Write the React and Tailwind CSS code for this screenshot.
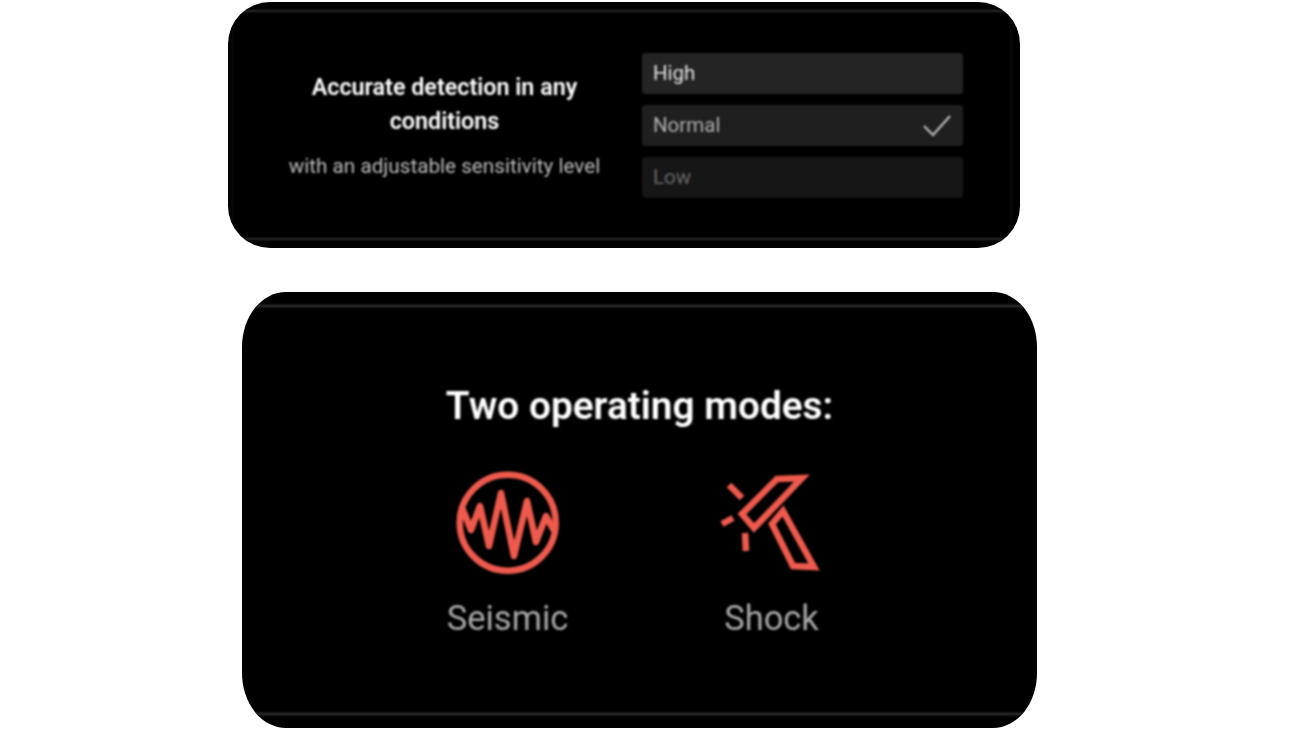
import React from "react";

const options = [
  { label: "High", row: "bg-[#242424] text-[#e4e4e4]" },
  { label: "Normal", row: "bg-[#1f1f1f] text-[#b0b0b0]", checked: true },
  { label: "Low", row: "bg-[#161616] text-[#666666]" },
];

const SeismicIcon = () => (
  <svg width="140" height="120" viewBox="-3 0 140 120" fill="none" stroke="#ee5a4d" strokeWidth="6.5">
    <circle cx="66.7" cy="61.7" r="48" />
    <path
      d="M22 49 L30 69 L39 45 L48 85 L60 32 L73 95 L86 40 L95 81 L105 55 L112 68"
      strokeLinejoin="round"
      strokeLinecap="round"
    />
  </svg>
);

const ShockIcon = () => (
  <svg width="140" height="120" viewBox="-4 0 140 120" fill="none" stroke="#ee5a4d" strokeWidth="6.5">
    <path d="M71 18 L96 17 L48 67 L36 53 Z" />
    <path d="M77 50 L108 106 L87 105 L66 63 Z" />
    <path d="M23 24 L36 37 M16 63 L27 57 M39 72 L40 90" />
  </svg>
);

export default function App() {
  return (
    <div className="h-[731px] w-[1300px] overflow-hidden bg-white pt-[2px] font-['Roboto',sans-serif]">
      <div className="ml-[228px] h-[246px] w-[792px] overflow-hidden rounded-[42px] bg-black pt-[8px] pr-[8px] pb-[8px] pl-[4px]">
        <div className="flex h-[230px] items-start border-x border-y-2 border-x-[#161616] border-y-[#2e2e2e] blur-[0.8px]">
          <div className="mt-[58px] ml-[50px] w-[323px] text-center">
            <h2 className="text-[23.3px] leading-[34px] font-semibold text-white">
              Accurate detection in any conditions
            </h2>
            <p className="mt-[15px] text-[20.7px] leading-[26px] whitespace-nowrap text-[#bcbcbc]">
              with an adjustable sensitivity level
            </p>
          </div>
          <div className="mt-[41px] ml-[36px] flex w-[321px] flex-col gap-[11px]">
            {options.map((o) => (
              <div
                key={o.label}
                className={`flex h-[41px] items-center justify-between rounded-[4px] px-[11px] text-[20.5px] ${o.row}`}
              >
                <span>{o.label}</span>
                {o.checked && (
                  <svg width="30" height="24" viewBox="0 0 30 24" fill="none" stroke="#c4c4c4" strokeWidth="2">
                    <path d="M2 12 L11 21 L28 2" />
                  </svg>
                )}
              </div>
            ))}
          </div>
        </div>
      </div>

      <div className="mt-[44px] ml-[242px] h-[436px] w-[795px] overflow-hidden rounded-[44px/55px] bg-black py-[13px]">
        <div className="flex h-[410px] flex-col items-center border-y-2 border-[#383838] blur-[0.8px]">
          <h1 className="mt-[71px] text-[38.8px] leading-[56px] font-semibold whitespace-nowrap text-white">
            Two operating modes:
          </h1>
          <div className="mt-[27px] flex gap-[124px]">
            <div className="flex w-[140px] flex-col items-center">
              <SeismicIcon />
              <span className="mt-[17px] text-[34.5px] leading-[40px] text-[#a8a8a8]">Seismic</span>
            </div>
            <div className="flex w-[140px] flex-col items-center">
              <ShockIcon />
              <span className="mt-[17px] text-[34.5px] leading-[40px] text-[#a8a8a8]">Shock</span>
            </div>
          </div>
        </div>
      </div>
    </div>
  );
}
